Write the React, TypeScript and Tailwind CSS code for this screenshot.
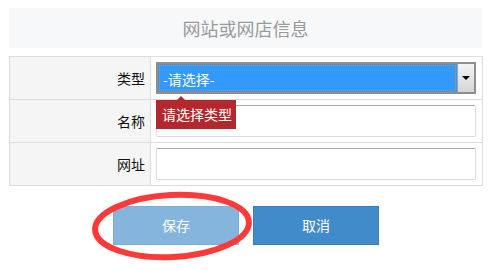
export default function App() {
  const font = { fontFamily: '"Noto Sans CJK SC", "Noto Sans", sans-serif' };

  return (
    <div className="relative w-[491px] h-[271px] bg-white pt-[8px]" style={font}>
      {/* Section title */}
      <div className="mx-[9px] h-[40px] bg-[#f7f8fa] flex items-center justify-center text-[18px] text-[#9a9a9a]">
        网站或网店信息
      </div>

      {/* Form table */}
      <div className="mx-[9px] mt-[8px] w-[474px] border border-[#dcdcdc] text-[14px] text-[#111]">
        {/* 类型 */}
        <div className="flex h-[43px] border-b border-[#dcdcdc]">
          <div className="w-[141px] shrink-0 bg-[#f5f5f5] border-r border-[#dcdcdc] flex items-center justify-end pr-[5px]">
            类型
          </div>
          <div className="flex-1 flex items-center pl-[5px] pr-[6px]">
            <div className="flex w-[320px] h-[32px] border-2 border-[#8e8e8e] bg-[#3399ff]">
              <div className="flex-1 m-[1px] border border-dotted border-[#e08a3c] flex items-end pb-[1px] pl-[3px] text-white text-[14px] leading-[20px]">
                -请选择-
              </div>
              <div className="w-[17px] shrink-0 bg-gradient-to-b from-[#f4f4f4] to-[#d6d6d6] border-l border-[#a0a0a0] flex items-center justify-center">
                <span className="w-0 h-0 border-l-[4px] border-r-[4px] border-t-[4px] border-l-transparent border-r-transparent border-t-black" />
              </div>
            </div>
          </div>
        </div>

        {/* 名称 */}
        <div className="flex h-[43px] border-b border-[#dcdcdc]">
          <div className="w-[141px] shrink-0 bg-[#f5f5f5] border-r border-[#dcdcdc] flex items-center justify-end pr-[5px]">
            名称
          </div>
          <div className="relative flex-1 flex items-center pl-[5px] pr-[6px]">
            <div className="w-[320px] h-[32px] bg-white border border-[#dcdcdc] border-t-[#ababab] rounded-[2px]" />
            {/* validation tip */}
            <div className="absolute left-[5px] top-0 w-[80px] h-[29px] bg-[#b3282d] text-white text-[14px] flex items-center pl-[6px]">
              <span className="absolute -top-[4px] left-[21px] w-0 h-0 border-l-[4px] border-r-[4px] border-b-[4px] border-l-transparent border-r-transparent border-b-[#b3282d]" />
              请选择类型
            </div>
          </div>
        </div>

        {/* 网址 */}
        <div className="flex h-[42px]">
          <div className="w-[141px] shrink-0 bg-[#f5f5f5] border-r border-[#dcdcdc] flex items-center justify-end pr-[5px]">
            网址
          </div>
          <div className="flex-1 flex items-center pl-[5px] pr-[6px]">
            <div className="w-[320px] h-[32px] bg-white border border-[#dcdcdc] border-t-[#ababab] rounded-[2px]" />
          </div>
        </div>
      </div>

      {/* Actions */}
      <div className="flex justify-center gap-[14px] mt-[20px] pl-[1px]">
        <button className="w-[126px] h-[39px] bg-[#85b4dc] border border-[#7eaed8] text-white text-[14px]">
          保存
        </button>
        <button className="w-[126px] h-[39px] bg-[#428bca] border border-[#3a7cbd] text-white text-[14px]">
          取消
        </button>
      </div>

      {/* hand-drawn annotation */}
      <svg className="absolute left-[90px] top-[190px] pointer-events-none" width="164" height="72" viewBox="0 0 164 72">
        <ellipse cx="82" cy="36" rx="77" ry="31" fill="none" stroke="#fc3a3a" strokeWidth="6" transform="rotate(-3 82 36)" />
      </svg>
    </div>
  );
}
